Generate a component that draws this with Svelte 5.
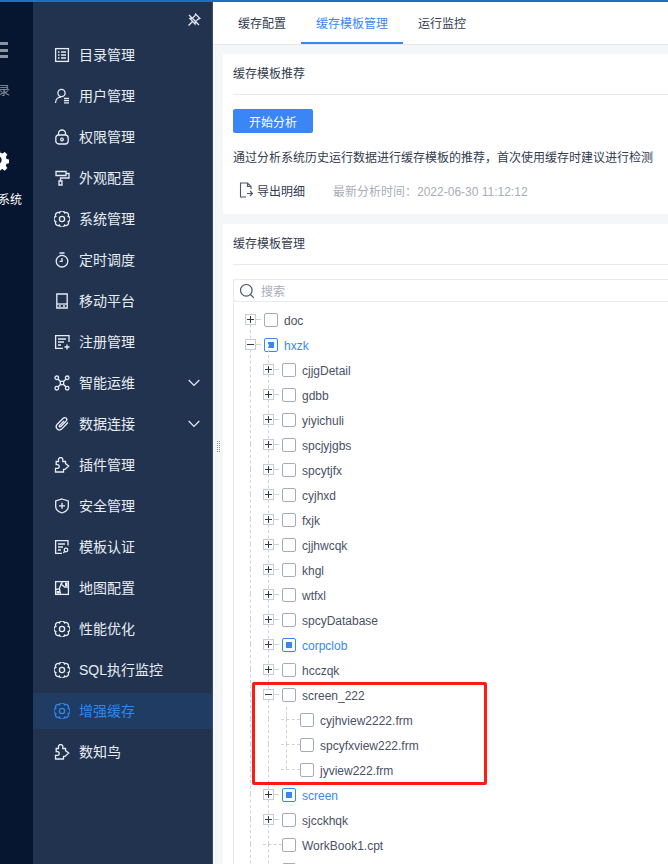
<script lang="ts">
  const menu = [
    { label: '目录管理', icon: 'catalog' },
    { label: '用户管理', icon: 'user' },
    { label: '权限管理', icon: 'lock' },
    { label: '外观配置', icon: 'roller' },
    { label: '系统管理', icon: 'gear' },
    { label: '定时调度', icon: 'timer' },
    { label: '移动平台', icon: 'mobile' },
    { label: '注册管理', icon: 'register' },
    { label: '智能运维', icon: 'drone', arrow: true },
    { label: '数据连接', icon: 'clip', arrow: true },
    { label: '插件管理', icon: 'puzzle' },
    { label: '安全管理', icon: 'shield' },
    { label: '模板认证', icon: 'cert' },
    { label: '地图配置', icon: 'map' },
    { label: '性能优化', icon: 'gear' },
    { label: 'SQL执行监控', icon: 'gear' },
    { label: '增强缓存', icon: 'gear', active: true },
    { label: '数知鸟', icon: 'puzzle' }
  ];

  const tree = [
    { name: 'doc', depth: 0, toggle: 'plus', lines: [] },
    { name: 'hxzk', depth: 0, toggle: 'minus', checked: true, lines: [0] },
    { name: 'cjjgDetail', depth: 1, toggle: 'plus', lines: [0, 1] },
    { name: 'gdbb', depth: 1, toggle: 'plus', lines: [0, 1] },
    { name: 'yiyichuli', depth: 1, toggle: 'plus', lines: [0, 1] },
    { name: 'spcjyjgbs', depth: 1, toggle: 'plus', lines: [0, 1] },
    { name: 'spcytjfx', depth: 1, toggle: 'plus', lines: [0, 1] },
    { name: 'cyjhxd', depth: 1, toggle: 'plus', lines: [0, 1] },
    { name: 'fxjk', depth: 1, toggle: 'plus', lines: [0, 1] },
    { name: 'cjjhwcqk', depth: 1, toggle: 'plus', lines: [0, 1] },
    { name: 'khgl', depth: 1, toggle: 'plus', lines: [0, 1] },
    { name: 'wtfxl', depth: 1, toggle: 'plus', lines: [0, 1] },
    { name: 'spcyDatabase', depth: 1, toggle: 'plus', lines: [0, 1] },
    { name: 'corpclob', depth: 1, toggle: 'plus', checked: true, lines: [0, 1] },
    { name: 'hcczqk', depth: 1, toggle: 'plus', lines: [0, 1] },
    { name: 'screen_222', depth: 1, toggle: 'minus', lines: [0, 1] },
    { name: 'cyjhview2222.frm', depth: 2, first: true, lines: [0, 1, 2] },
    { name: 'spcyfxview222.frm', depth: 2, lines: [0, 1, 2] },
    { name: 'jyview222.frm', depth: 2, lines: [0, 1, 2] },
    { name: 'screen', depth: 1, toggle: 'plus', checked: true, lines: [0, 1] },
    { name: 'sjcckhqk', depth: 1, toggle: 'plus', lines: [0, 1] },
    { name: 'WorkBook1.cpt', depth: 1, lines: [0, 1] },
    { name: '', depth: 1, lines: [0, 1] }
  ];

  // scalloped outline for the gear icons, 8 lobes
  const gearPts = Array.from({ length: 8 }, (_, i) => {
    const a = (i * Math.PI) / 4 + Math.PI / 8;
    return `${(8 + 6.6 * Math.cos(a)).toFixed(2)} ${(8 + 6.6 * Math.sin(a)).toFixed(2)}`;
  });
  const gearPath = 'M' + gearPts[0] + gearPts.slice(1).concat(gearPts[0]).map((p) => ` A2.6 2.6 0 0 1 ${p}`).join('') + 'Z';
</script>

{#snippet icon(name)}
  <svg class="ico" viewBox="0 0 16 16" fill="none" stroke="currentColor" stroke-width="1.3">
    {#if name === 'catalog'}
      <rect x="1.6" y="1.6" width="12.8" height="12.8" />
      <path d="M4 5h1.500M7 5h5M4 8h1.500M7 8h5M4 11h1.500M7 11h5" />
    {:else if name === 'user'}
      <circle cx="7.500" cy="5" r="3.600" />
      <path d="M1.500 15c0-3.500 2.400-6 5.600-6M10 10.500h5M10 12.700h5M10 14.900h5" />
    {:else if name === 'lock'}
      <rect x="1.800" y="6" width="12.400" height="9" rx="3" />
      <path d="M4.500 6V4.500a3.500 3.500 0 0 1 7 0V6" />
      <circle cx="8" cy="10.500" r="1.300" />
    {:else if name === 'roller'}
      <path d="M2 1.500h10v4H2zM12 3.500h3v4.500H6.500v3M5 11h3v4H5z" />
    {:else if name === 'gear'}
      <path d={gearPath} />
      <circle cx="8" cy="8" r="2.600" />
    {:else if name === 'timer'}
      <circle cx="8" cy="9.200" r="5.800" />
      <path d="M5.500 1h5M8 6v3.400H5.600" />
    {:else if name === 'mobile'}
      <path d="M2.800 1h10.400v14H2.800z" />
      <path d="M3 11h10" />
      <path d="M4.800 13h2M9 13h2" stroke-width="1.600" />
    {:else if name === 'register'}
      <path d="M15 8V1.600H1.600v12.800H9" />
      <path d="M4 5h8M4 8h6M4 11h3M10.500 13h5M13 10.500v5" />
    {:else if name === 'drone'}
      <circle cx="8" cy="8" r="1.800" />
      <circle cx="2.800" cy="2.800" r="1.800" />
      <circle cx="13.200" cy="2.800" r="1.800" />
      <circle cx="2.800" cy="13.200" r="1.800" />
      <circle cx="13.200" cy="13.200" r="1.800" />
      <path d="M4.200 4.200l2.500 2.500M11.800 4.200L9.300 6.700M4.200 11.800l2.500-2.500M11.800 11.800L9.300 9.300" stroke-width="1.500" />
    {:else if name === 'clip'}
      <path d="M14 6.500l-6.300 6.600a3.300 3.300 0 0 1-4.700-4.600l6.200-6.300a2 2 0 0 1 3 2.800L6.600 10.700a.8.8 0 0 1-1.200-1.100L10 5" />
    {:else if name === 'puzzle'}
      <path d="M1.500 15h8v-2.600h1.500l3.700-3.400-3.200-2.400V4.500H8.800V3.200a2.200 2.200 0 1 0-4.300 0v1.300H2.200v3.200h1.600a1.900 1.900 0 0 1 0 3.700H1.500z" />
    {:else if name === 'shield'}
      <path d="M8 1l6.300 2v5.500c0 3.200-3 5.400-6.300 6.500-3.300-1.100-6.300-3.300-6.300-6.500V3z" />
      <path d="M5 7.800h6M8 4.800v6" />
    {:else if name === 'cert'}
      <path d="M14 6.500V1.600H1.600v12.800H8" />
      <path d="M4 5h7M4 8h5M4 11h3" />
      <circle cx="12" cy="11" r="1.800" />
      <path d="M10.600 12.400l-1.200 1.600" />
    {:else if name === 'map'}
      <rect x="1.600" y="1.600" width="12.800" height="12.800" />
      <path d="M1.600 9.500l3.500-.5 2-5 3.500 3h3.800M8.500 1.600l-1.400 3M5.500 9l1 5" />
      <path d="M2.500 11h3.200v2.600H2.500zM11 2.600h2.600v3.400H11z" fill="currentColor" stroke="none" />
    {/if}
  </svg>
{/snippet}

<div class="page">
  <div class="topline"></div>
  <div class="body">
    <aside class="rail">
      <div class="rail-inner">
        <div class="burger"><i></i><i></i><i></i></div>
        <div class="rail-dir">目录</div>
        <svg class="rail-gear" viewBox="0 0 24 24" fill="#fff">
          <path fill-rule="evenodd" d="M10 1h4l.6 3 2.200.9 2.600-1.700 2.800 2.800-1.700 2.600.9 2.200 3 .6v4l-3 .6-.9 2.200 1.700 2.600-2.800 2.800-2.600-1.700-2.200.9-.6 3h-4l-.6-3-2.200-.9-2.600 1.700-2.800-2.800 1.700-2.600-.9-2.200-3-.6v-4l3-.6.9-2.200L1.600 5.800 4.400 3 7 4.700 9.200 3.800zM12 8a4 4 0 1 0 0 8 4 4 0 0 0 0-8z" />
        </svg>
        <div class="rail-sys">管理系统</div>
      </div>
    </aside>

    <nav class="side">
      <div class="pin">
        <svg viewBox="0 0 14 14" width="14" height="14" fill="none" stroke="#e8edf4" stroke-width="1.200">
          <path d="M8.500 1l4.500 4.500-2 .6-2.600 2.600-.3 2.500L2.900 5.500l2.500-.3L8 2.600zM5.500 8.500L1.500 12.500M2 2l10 10" />
        </svg>
      </div>
      <ul>
        {#each menu as m}
          <li class:active={m.active}>
            {@render icon(m.icon)}
            <span class="lbl">{m.label}</span>
            {#if m.arrow}
              <svg class="arrow" viewBox="0 0 12 8" fill="none" stroke="currentColor" stroke-width="1.200"><path d="M.7 1l5.300 5.300L11.300 1" /></svg>
            {/if}
          </li>
        {/each}
      </ul>
    </nav>

    <div class="splitter"><div class="grip"></div></div>

    <main class="main">
      <div class="tabs">
        <div class="tab">缓存配置</div>
        <div class="tab on">缓存模板管理</div>
        <div class="tab">运行监控</div>
      </div>

      <section class="card top">
        <h3>缓存模板推荐</h3>
        <button class="analyse">开始分析</button>
        <p class="desc">通过分析系统历史运行数据进行缓存模板的推荐&#xFF0C;首次使用缓存时建议进行检测</p>
        <div class="export">
          <svg viewBox="0 0 14 16" width="14" height="16" fill="none" stroke="#4a5470" stroke-width="1.100">
            <path d="M7 15H1.500V1H8.500L12 4.500V7M8.500 1v3.500H12M8 11.500h5.500M11 9l2.500 2.500L11 14" />
          </svg>
          <span class="exp-label">导出明细</span>
          <span class="time">最新分析时间&#xFF1A;2022-06-30 11:12:12</span>
        </div>
      </section>

      <section class="card manage">
        <h3>缓存模板管理</h3>
        <div class="treebox">
          <div class="search">
            <svg viewBox="0 0 16 16" width="16" height="16" fill="none" stroke="#4a5568" stroke-width="1.200">
              <circle cx="7.300" cy="7.300" r="5.800" /><path d="M11.500 11.500l3.300 3.300" />
            </svg>
            <span>搜索</span>
          </div>
          <div class="tree">
            {#each tree as n}
              <div class="row" style="padding-left: {n.depth * 18}px">
                {#each n.lines as l}
                  <span class="vline" class:first={n.first && l === 2} style="left: {l * 18 + 16}px"></span>
                {/each}
                {#if n.toggle}
                  <span class="toggle">
                    <i class="h"></i>
                    {#if n.toggle === 'plus'}<i class="v"></i>{/if}
                  </span>
                  <span class="dash"></span>
                {:else}
                  <span class="leaf-dash"></span>
                {/if}
                <span class="check" class:on={n.checked}></span>
                <span class="name" class:blue={n.checked}>{n.name}</span>
              </div>
            {/each}
          </div>
        </div>
      </section>

      <div class="redbox"></div>
    </main>
  </div>
</div>

<style>
  :global(body) {
    margin: 0;
    font-family: "Liberation Sans", "Noto Sans CJK SC", sans-serif;
  }

  .page {
    width: 668px;
    height: 864px;
    overflow: hidden;
    background: #f5f6f8;
  }

  .topline {
    height: 2px;
    background: #1f6fc0;
  }

  .body {
    display: flex;
    height: 862px;
  }

  .rail {
    width: 33px;
    flex: none;
    overflow: hidden;
    background: #061530;
  }

  .rail-inner {
    width: 60px;
    margin-left: -32px;
    display: flex;
    flex-direction: column;
    align-items: center;
    color: #fff;
  }

  .burger {
    margin-top: 40px;
    width: 20px;
    height: 16px;
    display: flex;
    flex-direction: column;
    justify-content: space-between;
  }

  .burger i {
    height: 3px;
    background: #8b93a1;
  }

  .rail-dir {
    margin-top: 25px;
    font-size: 12px;
    line-height: 16px;
    color: #8b93a1;
  }

  .rail-gear {
    width: 22px;
    height: 22px;
    margin-top: 50px;
  }

  .rail-sys {
    margin-top: 21px;
    font-size: 12px;
    line-height: 16px;
    white-space: nowrap;
  }

  .side {
    width: 180px;
    flex: none;
    box-sizing: border-box;
    border-right: 1px solid #3d4d68;
    background: #223350;
    color: #e8edf4;
    font-size: 14px;
  }

  .pin {
    height: 35px;
    display: flex;
    justify-content: flex-end;
    align-items: center;
    padding-right: 11px;
  }

  .side ul {
    list-style: none;
    margin: 0;
    padding: 0;
  }

  .side li {
    height: 36px;
    margin-top: 5px;
    display: flex;
    align-items: center;
    padding-left: 21px;
  }

  .side li:first-child {
    margin-top: 0;
  }

  .side li.active {
    background: #213c62;
    color: #2d87ee;
  }

  .ico {
    width: 16px;
    height: 16px;
    flex: none;
  }

  .lbl {
    margin-left: 9px;
    line-height: 20px;
  }

  .arrow {
    width: 12px;
    height: 8px;
    margin-left: auto;
    margin-right: 12px;
  }

  .splitter {
    width: 10px;
    flex: none;
    display: flex;
    align-items: center;
    justify-content: center;
    position: relative;
    z-index: 2;
    margin-right: -10px;
  }

  .grip {
    width: 4px;
    height: 12px;
    margin-top: 27px;
    background: conic-gradient(#9a929c 25%, transparent 0) 0 0 / 2px 2px;
  }

  .main {
    flex: 1;
    min-width: 0;
    position: relative;
    overflow: hidden;
  }

  .tabs {
    height: 42px;
    background: #fff;
    display: flex;
    padding-left: 10px;
    border-bottom: 1px solid #e6e8ee;
    font-size: 12px;
    color: #333c50;
    position: relative;
    z-index: 3;
  }

  .tab {
    padding: 0 15px;
    line-height: 44px;
    height: 42px;
    box-sizing: border-box;
  }

  .tab.on {
    color: #3b86f6;
    border-bottom: 2px solid #3b86f6;
  }

  .card {
    background: #fff;
    margin: 10px 0 0 10px;
    padding: 0 10px;
    width: 445px;
    box-sizing: border-box;
    color: #333c50;
    font-size: 12px;
  }

  .card h3 {
    margin: 0 -10px 0 0;
    font-size: 12px;
    font-weight: 400;
    line-height: 40px;
    height: 40px;
    border-bottom: 1px solid #e8eaef;
  }

  .top {
    height: 160px;
    margin-top: 9px;
  }

  .analyse {
    display: block;
    margin-top: 14px;
    width: 80px;
    height: 24px;
    border: 0;
    border-radius: 2px;
    background: #3b86f6;
    color: #fff;
    font: inherit;
    padding: 0;
  }

  .desc {
    margin: 15px 0 0;
    line-height: 20px;
  }

  .export {
    margin-top: 12px;
    padding-left: 6px;
    display: flex;
    align-items: center;
    height: 20px;
  }

  .exp-label {
    margin-left: 4px;
  }

  .time {
    margin-left: 28px;
    color: #a9adb8;
  }

  .manage {
    height: 650px;
  }

  .treebox {
    margin-top: 14px;
    border-left: 1px solid #e8eaef;
    margin-right: -10px;
  }

  .search {
    height: 21px;
    border: 1px solid #e8eaef;
    border-right: 0;
    margin-left: -1px;
    border-radius: 3px 0 0 3px;
    display: flex;
    align-items: center;
    padding-left: 5px;
    color: #a9adb8;
  }

  .search span {
    margin-left: 6px;
  }

  .tree {
    padding-left: 11px;
    padding-top: 5px;
  }

  .row {
    height: 25px;
    display: flex;
    align-items: center;
    position: relative;
    white-space: nowrap;
    box-sizing: border-box;
  }

  .vline {
    position: absolute;
    top: -13px;
    height: 25px;
    border-left: 1px dashed #cfd2d8;
    margin-left: -11px;
  }

  .vline.first {
    top: 0;
    height: 12px;
  }

  .toggle {
    width: 11px;
    height: 11px;
    box-sizing: border-box;
    border: 1px solid #c9ccd6;
    background: #fff;
    flex: none;
    position: relative;
    z-index: 1;
  }

  .toggle i {
    position: absolute;
    background: #333c50;
  }

  .toggle .h {
    left: 1px;
    right: 1px;
    top: 4px;
    height: 1px;
  }

  .toggle .v {
    top: 1px;
    bottom: 1px;
    left: 4px;
    width: 1px;
  }

  .dash {
    width: 5px;
    margin-right: 3px;
    border-top: 1px dashed #cfd2d8;
    flex: none;
  }

  .leaf-dash {
    width: 19px;
    border-top: 1px dashed #cfd2d8;
    flex: none;
  }

  .check {
    width: 14px;
    height: 14px;
    box-sizing: border-box;
    border: 1px solid #a6abb9;
    border-radius: 2px;
    background: #fff;
    flex: none;
    position: relative;
  }

  .check.on {
    border-color: #3b86f6;
  }

  .check.on::after {
    content: "";
    position: absolute;
    inset: 3px;
    background: #3b86f6;
  }

  .name {
    margin-left: 6px;
    padding-top: 2px;
    color: #4a5166;
  }

  .name.blue {
    color: #3b86f6;
  }

  .redbox {
    position: absolute;
    left: 39px;
    top: 680px;
    width: 235px;
    height: 103px;
    box-sizing: border-box;
    border: 3px solid #ff1a12;
    border-radius: 2px;
  }
</style>
